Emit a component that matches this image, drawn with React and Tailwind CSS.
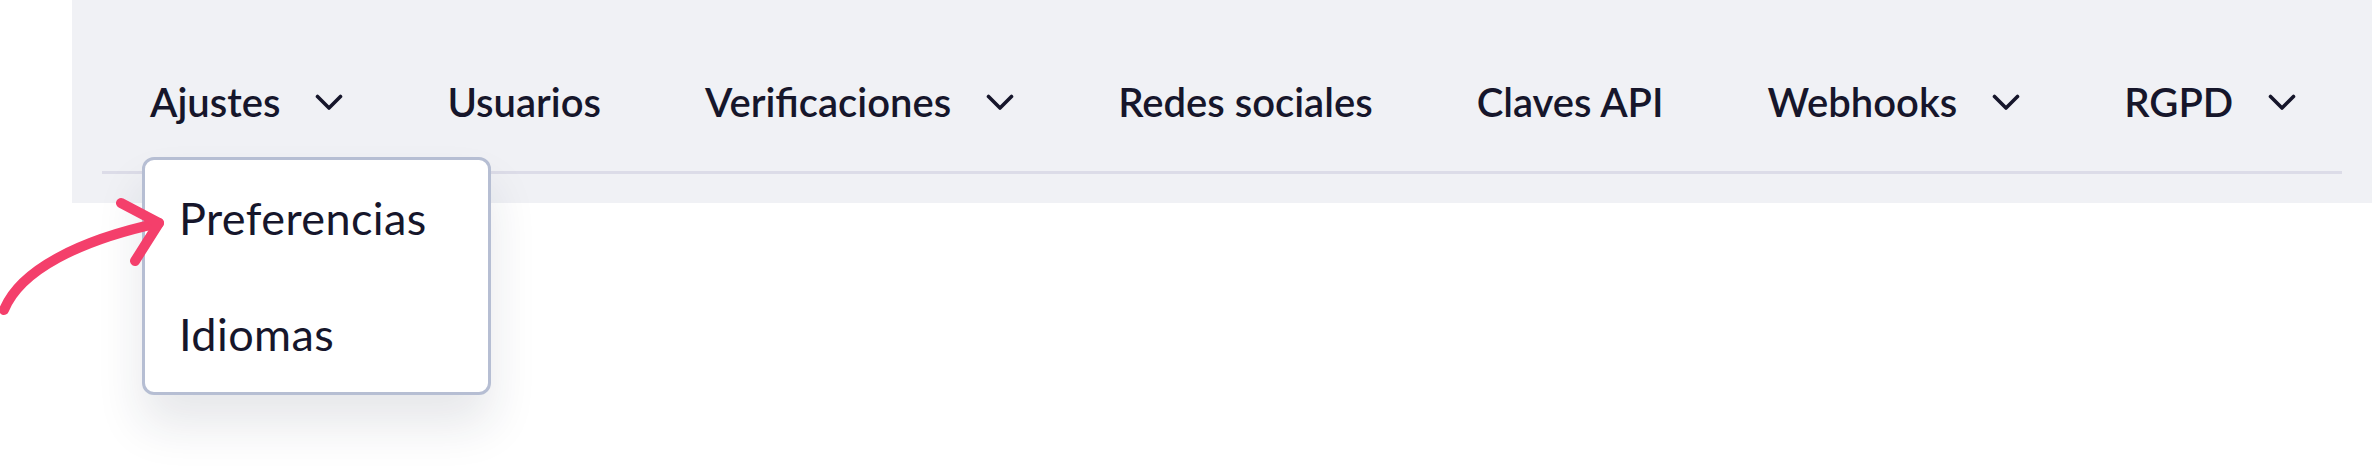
import React from "react";

const navItems = [
  { label: "Ajustes", menu: true },
  { label: "Usuarios" },
  { label: "Verificaciones", menu: true },
  { label: "Redes sociales" },
  { label: "Claves API" },
  { label: "Webhooks", menu: true },
  { label: "RGPD", menu: true },
];

const Chevron = () => (
  <svg width="28" height="17" viewBox="0 0 28 17" fill="none" className="ml-[35px] shrink-0">
    <polyline
      points="2.5,2.5 14,14 25.5,2.5"
      stroke="#16162b"
      strokeWidth="3.6"
      strokeLinecap="round"
      strokeLinejoin="round"
    />
  </svg>
);

const App = () => {
  return (
    <div className="relative w-full h-[468px] bg-white overflow-hidden font-['Lato',_sans-serif] text-[#16162b]">
      {/* Tabs bar */}
      <div className="ml-[72px] bg-[#f0f1f5] h-[203px] px-[30px] pt-[78px]">
        <nav className="flex items-center gap-[104px] pl-[48px] h-[48px]">
          {navItems.map((item) => (
            <div key={item.label} className="flex items-center shrink-0">
              <span className="text-[40px] leading-[48px] font-semibold whitespace-nowrap">
                {item.label}
              </span>
              {item.menu && <Chevron />}
            </div>
          ))}
        </nav>
        <div className="mt-[45px] h-[3px] bg-[#dcdce8]" />
      </div>

      {/* Dropdown for Ajustes */}
      <div className="absolute left-[142px] top-[157px] w-[349px] h-[238px] bg-white border-[3px] border-[#b6bed3] rounded-[12px] shadow-[0_30px_48px_rgba(30,35,60,0.11)]">
        <ul>
          <li className="px-[34px] py-[31px] text-[45px] leading-[54px] tracking-[0.4px]">Preferencias</li>
          <li className="px-[34px] py-[31px] text-[45px] leading-[54px] tracking-[0.4px]">Idiomas</li>
        </ul>
      </div>

      {/* Hand-drawn arrow */}
      <svg
        className="absolute left-0 top-0 pointer-events-none"
        width="200"
        height="340"
        viewBox="0 0 200 340"
        fill="none"
      >
        <path
          d="M4 310 C 20 270, 80 240, 159 223"
          stroke="#f43f6b"
          strokeWidth="10"
          strokeLinecap="round"
        />
        <path
          d="M121 203 L159 223 L135 261"
          stroke="#f43f6b"
          strokeWidth="10"
          strokeLinecap="round"
          strokeLinejoin="round"
        />
      </svg>
    </div>
  );
};

export default App;
